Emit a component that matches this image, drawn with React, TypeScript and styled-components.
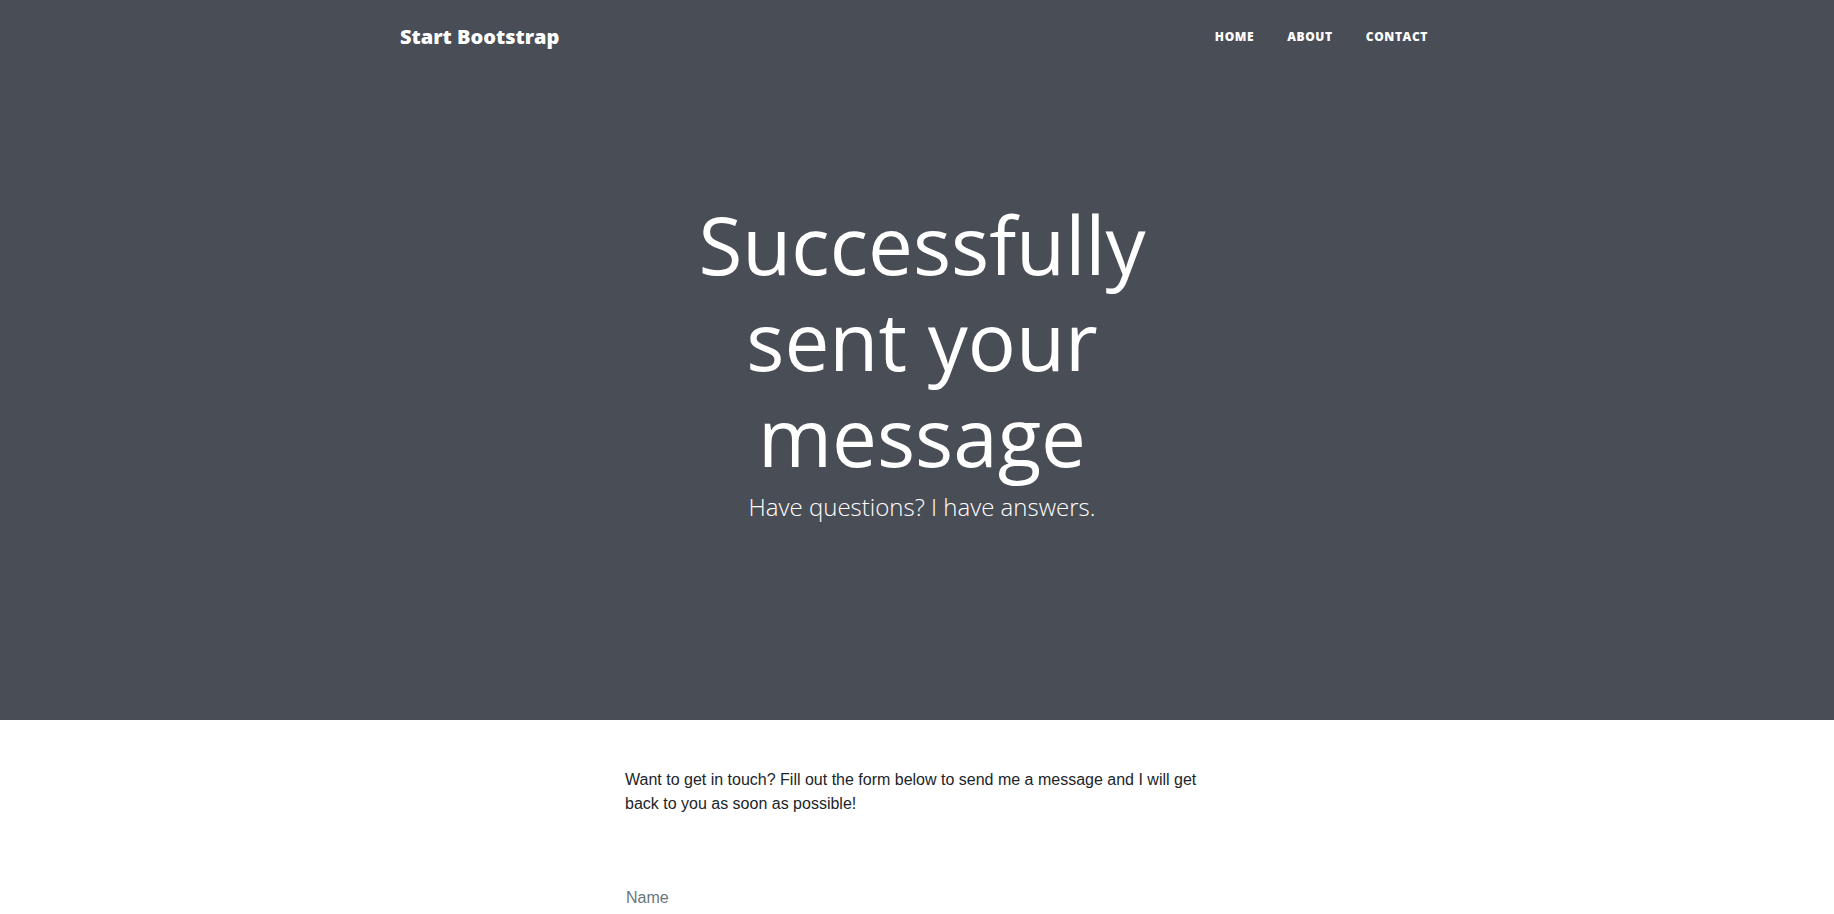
import React from "react";
import styled, { createGlobalStyle } from "styled-components";

const GlobalStyle = createGlobalStyle`
  html, body { margin: 0; padding: 0; }
  body {
    background: #ffffff;
    color: #212529;
    font-family: "Liberation Sans", Arial, sans-serif;
    font-size: 16px;
    line-height: 1.5;
  }
  * { box-sizing: border-box; }
`;

const Masthead = styled.header`
  background: #494d55;
  color: #ffffff;
`;

const NavBar = styled.nav`
  width: 1034px;
  margin: 0 auto;
  height: 72px;
  padding-right: 6px;
  display: flex;
  align-items: center;
  justify-content: space-between;
`;

const Brand = styled.a`
  font-family: "Open Sans", sans-serif;
  font-weight: 800;
  font-size: 20px;
  color: #ffffff;
  text-decoration: none;
  margin-top: 1px;
`;

const NavList = styled.ul`
  list-style: none;
  margin: 0;
  padding: 0;
  display: flex;
  gap: 33px;
`;

const NavLink = styled.a`
  font-family: "Open Sans", sans-serif;
  font-weight: 800;
  font-size: 12px;
  letter-spacing: 0.6px;
  text-transform: uppercase;
  color: #ffffff;
  text-decoration: none;
`;

const HeroBody = styled.div`
  padding: 124px 0 200px;
`;

const Column = styled.div<{ $offset: number }>`
  width: 604px;
  margin-left: calc(50% - ${(p) => p.$offset}px);
`;

const HeroHeading = styled.div`
  text-align: center;
  font-family: "Open Sans", sans-serif;
`;

const Title = styled.h1`
  margin: 0;
  font-size: 80px;
  font-weight: 400;
  line-height: 1.2;
`;

const Subheading = styled.span`
  display: block;
  margin-top: 10px;
  font-size: 24px;
  font-weight: 300;
  line-height: 1.1;
`;

const Main = styled.main`
  padding-top: 48px;
`;

const Intro = styled.p`
  margin: 0;
  font-size: 16px;
  line-height: 24px;
  color: #212529;
`;

const Form = styled.form`
  margin-top: 54px;
  display: flex;
  flex-direction: column;
`;

const Field = styled.div`
  position: relative;
  height: 58px;
  border-bottom: 1px solid #dee2e6;
`;

const FieldLabel = styled.label`
  position: absolute;
  left: 1px;
  top: 16px;
  font-size: 16px;
  line-height: 24px;
  color: #6c757d;
`;

export default function App() {
  return (
    <>
      <GlobalStyle />
      <Masthead>
        <NavBar>
          <Brand href="#">Start Bootstrap</Brand>
          <NavList>
            <li><NavLink href="#">Home</NavLink></li>
            <li><NavLink href="#">About</NavLink></li>
            <li><NavLink href="#">Contact</NavLink></li>
          </NavList>
        </NavBar>
        <HeroBody>
          <Column $offset={297}>
            <HeroHeading>
              <Title>Successfully sent your message</Title>
              <Subheading>Have questions? I have answers.</Subheading>
            </HeroHeading>
          </Column>
        </HeroBody>
      </Masthead>
      <Main>
        <Column $offset={292}>
          <Intro>
            Want to get in touch? Fill out the form below to send me a message and I will get back to you as soon as possible!
          </Intro>
          <Form>
            <Field>
              <FieldLabel>Name</FieldLabel>
            </Field>
          </Form>
        </Column>
      </Main>
    </>
  );
}
